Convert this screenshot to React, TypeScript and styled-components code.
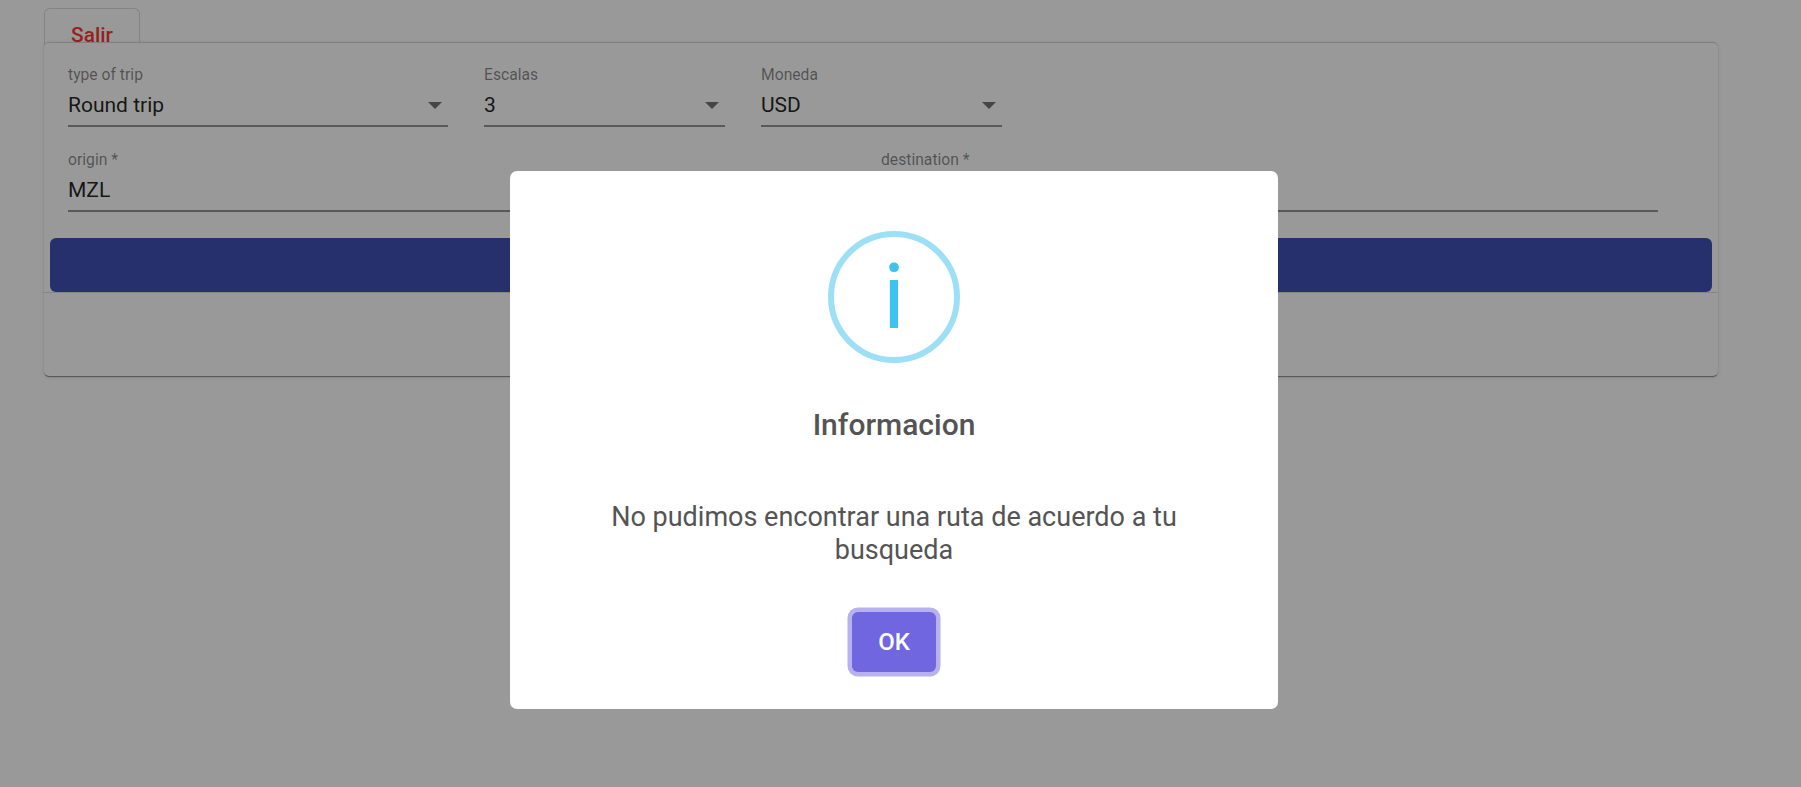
import React from "react";
import styled, { createGlobalStyle } from "styled-components";

const GlobalStyle = createGlobalStyle`
  * { box-sizing: border-box; }
  body {
    margin: 0;
    background: #fff;
    font-family: Roboto, "Liberation Sans", sans-serif;
    overflow: hidden;
  }
`;

const Page = styled.div`
  height: 787px;
  padding: 8px 0 0 44px;
  overflow: hidden;
`;

const TabBar = styled.nav`
  display: flex;
  height: 34px;
`;

const Tab = styled.a`
  width: 96px;
  height: 38px;
  padding-top: 14px;
  border: 1px solid #d8dbde;
  border-bottom: 0;
  border-radius: 6px 6px 0 0;
  color: #f93a34;
  font-size: 20.8px;
  font-weight: 500;
  line-height: 24px;
  text-align: center;
`;

const Card = styled.main`
  position: relative;
  width: 1674px;
  height: 334px;
  border-top: 1px solid #d4d6d8;
  border-radius: 5px;
  background: #fff;
  box-shadow: 0 2px 1px -1px rgba(0, 0, 0, 0.26), 0 1px 1px rgba(0, 0, 0, 0.2),
    0 1px 4px rgba(0, 0, 0, 0.12);
`;

const FieldRow = styled.div`
  display: flex;
  gap: 36px;
  height: 85px;
  padding: 21px 24px 0;
`;

const FieldBox = styled.label<{ $width: number }>`
  display: flex;
  flex-direction: column;
  width: ${(p) => p.$width}px;
  height: 63px;
  border-bottom: 2px solid #949494;
`;

const Caption = styled.span`
  color: rgba(0, 0, 0, 0.47);
  font-size: 15.7px;
  line-height: 22px;
`;

const ValueLine = styled.span`
  display: flex;
  align-items: center;
  justify-content: space-between;
  margin-top: 7px;
  padding-right: 6px;
  color: rgba(0, 0, 0, 0.87);
  font-size: 21px;
  line-height: 24px;
`;

const Arrow = styled.i`
  border: 7px solid transparent;
  border-top-color: #757575;
  border-bottom: 0;
`;

const SearchButton = styled.button`
  display: block;
  width: 1662px;
  height: 54px;
  margin: 25px 6px 0;
  border: 0;
  border-radius: 6px;
  background: #3f51b5;
`;

const Results = styled.section`
  border-top: 1px solid #dedede;
`;

const Backdrop = styled.div`
  position: fixed;
  inset: 0;
  padding-top: 171px;
  padding-right: 13px;
  background: rgba(0, 0, 0, 0.4);
`;

const Dialog = styled.div`
  display: flex;
  flex-direction: column;
  align-items: center;
  width: 768px;
  height: 538px;
  margin: 0 auto;
  padding-top: 60px;
  border-radius: 7px;
  background: #fff;
  color: #545454;
  text-align: center;
`;

const InfoIcon = styled.div`
  display: flex;
  justify-content: center;
  width: 132px;
  height: 132px;
  border: 6px solid #9de0f6;
  border-radius: 50%;
  color: #3fc3ee;
  font-size: 90px;
  line-height: 121px;
`;

const Title = styled.h2`
  margin: 44px 0 0;
  font-size: 30px;
  font-weight: 500;
  line-height: 36px;
`;

const Message = styled.p`
  width: 600px;
  margin: 58px 0 0;
  font-size: 27px;
  line-height: 33px;
`;

const Confirm = styled.button`
  width: 84px;
  height: 60px;
  margin-top: 45px;
  padding: 0;
  border: 0;
  border-radius: 6px;
  background: #7066e0;
  box-shadow: 0 0 0 4.5px rgba(112, 102, 224, 0.5);
  color: #fff;
  font-family: inherit;
  font-size: 24px;
  font-weight: 500;
`;

type FieldProps = { label: string; value?: string; width: number; select?: boolean };

const Field = ({ label, value, width, select }: FieldProps) => (
  <FieldBox $width={width}>
    <Caption>{label}</Caption>
    <ValueLine>
      {value}
      {select && <Arrow />}
    </ValueLine>
  </FieldBox>
);

export default function App() {
  return (
    <>
      <GlobalStyle />
      <Page>
        <TabBar>
          <Tab>Salir</Tab>
        </TabBar>
        <Card>
          <FieldRow>
            <Field label="type of trip" value="Round trip" width={380} select />
            <Field label="Escalas" value="3" width={241} select />
            <Field label="Moneda" value="USD" width={241} select />
          </FieldRow>
          <FieldRow>
            <Field label="origin *" value="MZL" width={777} />
            <Field label="destination *" width={777} />
          </FieldRow>
          <SearchButton aria-label="Buscar" />
          <Results />
        </Card>
      </Page>
      <Backdrop>
        <Dialog role="dialog">
          <InfoIcon>i</InfoIcon>
          <Title>Informacion</Title>
          <Message>No pudimos encontrar una ruta de acuerdo a tu busqueda</Message>
          <Confirm>OK</Confirm>
        </Dialog>
      </Backdrop>
    </>
  );
}
